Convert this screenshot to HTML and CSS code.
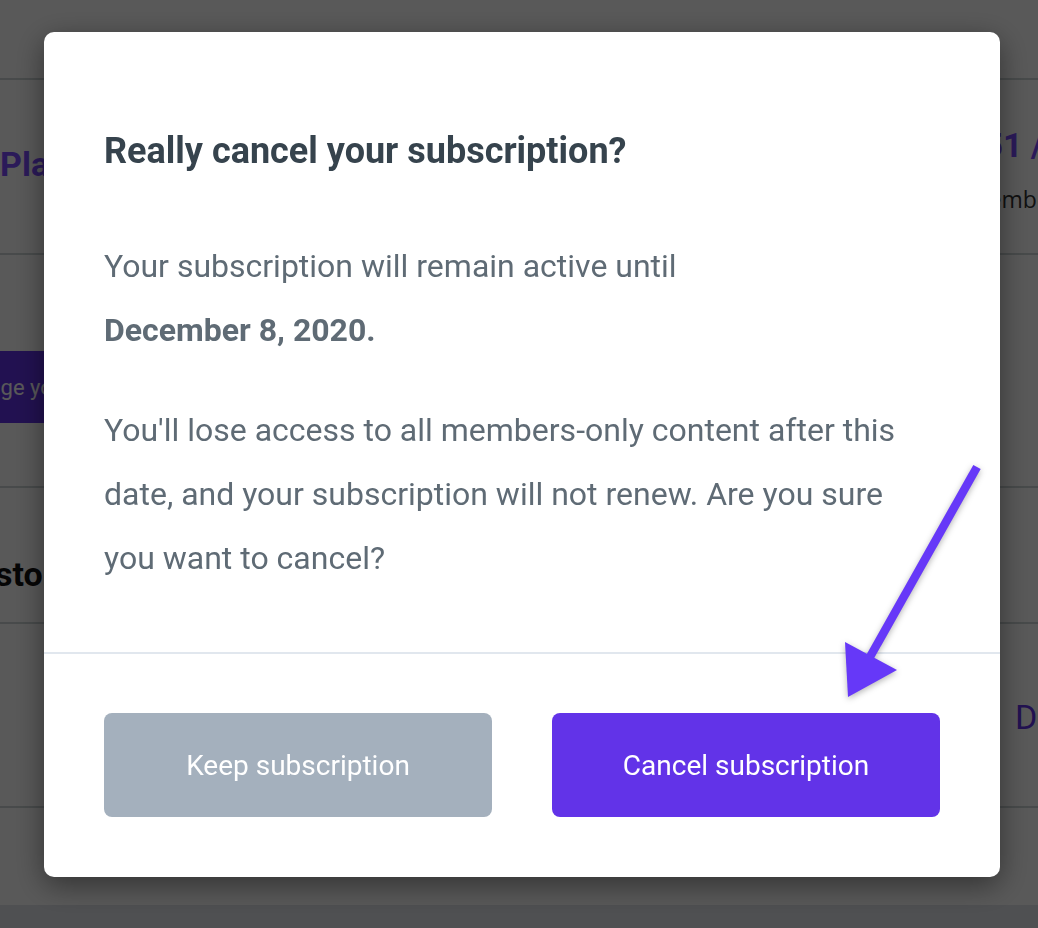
FILE: index.html
```html
<!DOCTYPE html>
<html lang="en">
<head>
<meta charset="utf-8">
<title>Cancel subscription</title>
<link rel="stylesheet" href="styles.css">
</head>
<body>
<div class="page">
  <div class="row row-top">
    <span class="top-text">Signed in as support-billing@example.com</span>
  </div>
  <div class="row row-plan">
    <div class="cell-left"><span class="plan-name">Plan</span></div>
    <div class="cell-right price-cell">
      <span class="price">$51 / month</span>
      <span class="renew">December 8</span>
    </div>
  </div>
  <div class="row row-change">
    <div class="cell-left"><span class="change-btn">Change your plan</span></div>
  </div>
  <div class="row row-history">
    <div class="cell-left"><span class="history">History</span></div>
  </div>
  <div class="row row-invoice">
    <div class="cell-right dl-cell"><span class="download">Download</span></div>
  </div>
  <div class="row row-blank"></div>
  <div class="page-footer"></div>
</div>

<div class="overlay">
  <div class="modal">
    <div class="modal-body">
      <h2 class="modal-title">Really cancel your subscription?</h2>
      <p class="modal-text">Your subscription will remain active until <strong class="date">December 8, 2020.</strong></p>
      <p class="modal-text">You'll lose access to all members-only content after this date, and your subscription will not renew. Are you sure you want to cancel?</p>
    </div>
    <div class="modal-footer">
      <button class="btn btn-keep">Keep subscription</button>
      <button class="btn btn-cancel">Cancel subscription</button>
    </div>
  </div>
</div>

<svg class="arrow" width="1038" height="928" viewBox="0 0 1038 928" xmlns="http://www.w3.org/2000/svg">
  <g fill="#6638f8" stroke="#6638f8">
    <line x1="977" y1="467" x2="866" y2="664" stroke-width="8.5" stroke-linecap="butt"/>
    <polygon points="845,642 897,670 848,697" stroke="none"/>
  </g>
</svg>
</body>
</html>
```
FILE: styles.css
```css
* { box-sizing: border-box; }
html, body { margin: 0; padding: 0; }
body {
  width: 1038px;
  height: 928px;
  overflow: hidden;
  background: #ffffff;
  font-family: Roboto, "Liberation Sans", sans-serif;
}
.page {
  width: 1038px;
  display: flex;
  flex-direction: column;
}
.row {
  display: flex;
  border-bottom: 2px solid #cdd5d6;
  position: relative;
}
.row-top {
  height: 80px;
  align-items: flex-start;
}
.top-text {
  margin-top: -35px;
  margin-left: 110px;
  font-family: "Open Sans", sans-serif;
  font-size: 26px;
  color: #333;
  letter-spacing: 0.5px;
}
.row-plan { height: 175px; }
.row-change { height: 233px; }
.row-history { height: 136px; }
.row-invoice { height: 184px; }
.row-blank { height: 97px; border-bottom: none; }
.page-footer { height: 40px; background: #e2e5eb; }

.cell-left { width: 990px; display: flex; }
.cell-right { display: flex; flex-direction: column; }
.price-cell { position: absolute; left: 964px; top: 45px; white-space: nowrap; }
.dl-cell { position: absolute; left: 1015px; top: 73px; white-space: nowrap; }

.plan-name {
  margin-top: 64px;
  margin-left: 0;
  font-size: 34px;
  font-weight: 700;
  color: #7b4cff;
}
.price {
  font-size: 34px;
  font-weight: 700;
  color: #7b4cff;
}
.renew {
  margin-top: 18px;
  margin-left: -16px;
  font-family: "Open Sans", sans-serif;
  font-size: 23px;
  color: #333;
}
.change-btn {
  margin-top: 96px;
  margin-left: -74px;
  height: 72px;
  padding: 0 24px;
  display: flex;
  align-items: center;
  background: #6233e8;
  color: #fff;
  font-size: 22px;
}
.history {
  margin-top: 66px;
  margin-left: -38px;
  font-size: 34px;
  font-weight: 700;
  color: #111;
}
.download {
  font-size: 34px;
  color: #6233e8;
}

.overlay {
  position: fixed;
  inset: 0;
  background: rgba(0, 0, 0, 0.65);
  display: flex;
  align-items: flex-start;
}
.modal {
  margin: 32px 0 0 44px;
  width: 956px;
  background: #fff;
  border-radius: 10px;
  box-shadow: 0 8px 30px rgba(0, 0, 0, 0.45);
  overflow: hidden;
}
.modal-body {
  padding: 97px 60px 62px;
  border-bottom: 2px solid #e1e7ee;
}
.modal-title {
  margin: 0 0 61px;
  font-size: 36px;
  line-height: 44px;
  font-weight: 700;
  color: #36434d;
}
.modal-text {
  margin: 0;
  max-width: 812px;
  font-size: 32px;
  line-height: 64px;
  color: #5f6b75;
}
.modal-text + .modal-text { margin-top: 36px; }
.date {
  display: block;
  font-weight: 700;
}
.modal-footer {
  padding: 59px 60px 60px;
  display: flex;
  gap: 60px;
}
.btn {
  flex: 1;
  height: 104px;
  border: none;
  border-radius: 8px;
  font-family: Roboto, "Liberation Sans", sans-serif;
  font-size: 28px;
  color: #fff;
  cursor: pointer;
}
.btn-keep { background: #a4b0bd; }
.btn-cancel { background: #6233e8; }

.arrow {
  position: fixed;
  left: 0;
  top: 0;
  pointer-events: none;
  filter: drop-shadow(0 2px 3px rgba(0, 0, 0, 0.3));
}
```
